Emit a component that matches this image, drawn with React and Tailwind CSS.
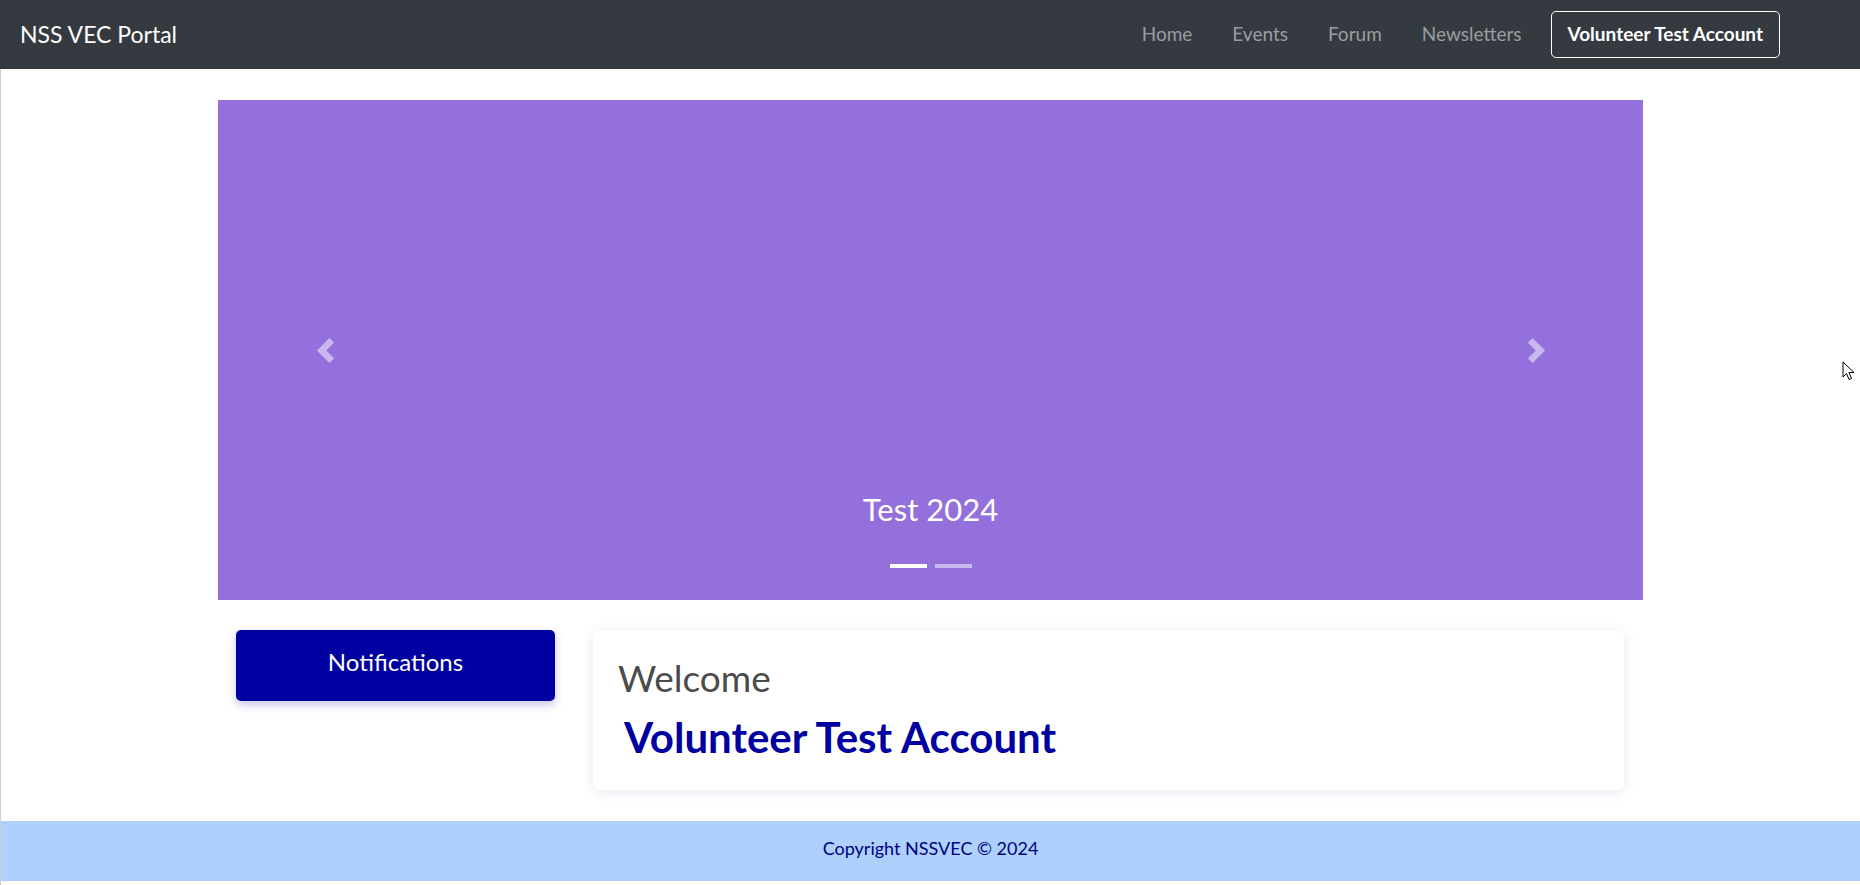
import React from "react";

function ChevronLeft() {
  return (
    <svg width="25" height="25" viewBox="0 0 8 8" fill="#fff">
      <path d="M5.25 0l-4 4 4 4 1.5-1.5L4.25 4l2.5-2.5L5.25 0z" />
    </svg>
  );
}

function ChevronRight() {
  return (
    <svg width="25" height="25" viewBox="0 0 8 8" fill="#fff">
      <path d="M2.75 0l-1.5 1.5L3.75 4l-2.5 2.5L2.75 8l4-4-4-4z" />
    </svg>
  );
}

export default function App() {
  return (
    <div
      className="relative w-[1860px] h-[885px] bg-white overflow-hidden flex flex-col"
      style={{ fontFamily: "Lato, 'Open Sans', sans-serif" }}
    >
      {/* Navbar */}
      <nav className="h-[69px] bg-[#343a40] flex items-center justify-between pl-[20px] pr-[80px] shrink-0">
        <div className="text-white text-[23px] leading-none">NSS VEC Portal</div>
        <div className="flex items-center">
          <div className="flex items-center gap-[40px] text-[19px] text-[#9a9da0]">
            <span>Home</span>
            <span>Events</span>
            <span>Forum</span>
            <span>Newsletters</span>
          </div>
          <div className="ml-[29px] h-[47px] border border-white rounded-[5px] px-[16px] flex items-center text-white font-bold text-[19px]">
            Volunteer Test Account
          </div>
        </div>
      </nav>

      <div className="flex-1 flex flex-col border-l border-[#cfcfcf]">
        {/* Main container */}
        <div className="w-[1425px] mx-auto mt-[31px]">
          {/* Carousel */}
          <div className="relative h-[500px] bg-[#9370db]">
            <div className="absolute left-0 top-0 bottom-0 w-[214px] flex items-center justify-center opacity-50">
              <ChevronLeft />
            </div>
            <div className="absolute right-0 top-0 bottom-0 w-[214px] flex items-center justify-center opacity-50">
              <ChevronRight />
            </div>
            <div className="absolute left-0 right-0 top-[389px] text-center text-white text-[31px] leading-[40px]">
              Test 2024
            </div>
            <div className="absolute left-0 right-0 top-[464px] flex justify-center gap-[8px]">
              <div className="w-[37px] h-[4px] bg-white" />
              <div className="w-[37px] h-[4px] bg-white opacity-50" />
            </div>
          </div>

          {/* Row */}
          <div className="flex items-start pl-[18px] gap-[38px] mt-[30px]">
            <div className="w-[319px] h-[71px] bg-[#0000a0] rounded-[5px] flex items-center justify-center text-white text-[24px] pb-[8px] shadow-[0_4px_8px_rgba(40,40,180,0.25)]">
              Notifications
            </div>
            <div className="w-[1031px] h-[160px] bg-white rounded-[6px] shadow-[0_2px_12px_rgba(60,60,160,0.12)] pl-[25px] pt-[25px]">
              <div className="text-[37px] leading-[46px] text-[#4b4b4b] font-normal">Welcome</div>
              <div className="ml-[6px] mt-[12px] text-[42px] leading-[48px] font-bold text-[#0000a0]">
                Volunteer Test Account
              </div>
            </div>
          </div>
        </div>

        {/* Footer */}
        <footer className="mt-[31px] h-[60px] bg-[#aed0fd] flex items-center justify-center text-[18px] text-[#000080] pb-[6px]">
          Copyright NSSVEC © 2024
        </footer>
      </div>

      {/* mouse cursor */}
      <svg
        className="absolute left-[1842px] top-[361px]"
        width="13"
        height="20"
        viewBox="0 0 13 20"
      >
        <path
          d="M1 1 L1 16 L4.5 12.5 L7 18.5 L9.5 17.5 L7 11.5 L12 11.5 Z"
          fill="#fff"
          stroke="#000"
          strokeWidth="1"
          strokeLinejoin="round"
        />
      </svg>
    </div>
  );
}
